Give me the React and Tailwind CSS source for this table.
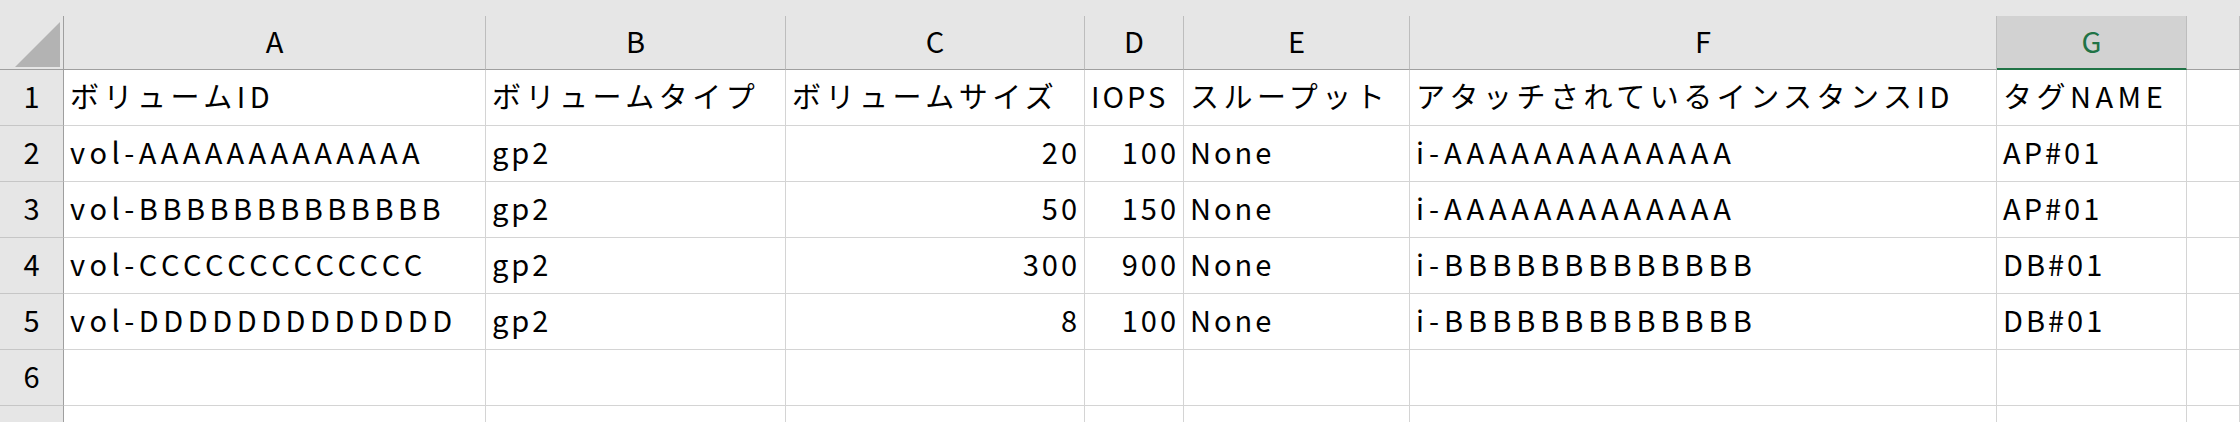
const cols = ["A", "B", "C", "D", "E", "F", "G", ""];

const rows = [
  ["ボリュームID", "ボリュームタイプ", "ボリュームサイズ", "IOPS", "スループット", "アタッチされているインスタンスID", "タグNAME"],
  ["vol-AAAAAAAAAAAAA", "gp2", 20, 100, "None", "i-AAAAAAAAAAAAA", "AP#01"],
  ["vol-BBBBBBBBBBBBB", "gp2", 50, 150, "None", "i-AAAAAAAAAAAAA", "AP#01"],
  ["vol-CCCCCCCCCCCCC", "gp2", 300, 900, "None", "i-BBBBBBBBBBBBB", "DB#01"],
  ["vol-DDDDDDDDDDDDD", "gp2", 8, 100, "None", "i-BBBBBBBBBBBBB", "DB#01"],
  ["", "", "", "", "", "", ""],
  ["", "", "", "", "", "", ""],
];

function trackingFor(r, c) {
  if (r === 0) return c === 3 ? "tracking-[3px]" : "tracking-[4.5px]";
  if (c === 0) return "tracking-[4.5px]";
  if (c === 5) return "tracking-[5px]";
  return "tracking-[3px]";
}

function ColHeader({ label }) {
  // column G is the selected one
  if (label === "G") {
    return (
      <div className="flex h-[54px] items-center justify-center border-r border-b-2 border-r-[#bdbdbd] border-b-[#217346] bg-[#d2d2d2] pb-[3px] text-[29px] leading-[49px] text-[#217346]">
        {label}
      </div>
    );
  }
  return (
    <div className="flex h-[54px] items-center justify-center border-r border-b border-r-[#bdbdbd] border-b-[#9f9f9f] pb-[4px] text-[29px] leading-[49px] text-black">
      {label}
    </div>
  );
}

function Cell({ value, track = "tracking-[3px]" }) {
  const isNum = typeof value === "number";
  return (
    <div
      className={[
        "flex h-[56px] items-center overflow-hidden whitespace-nowrap border-r border-b border-[#d4d4d4] bg-white pb-[4px] text-[29px] leading-[51px] text-black",
        isNum ? "justify-end pr-[4px]" : "pl-[6px]",
        track,
      ].join(" ")}
    >
      {value}
    </div>
  );
}

export default function App() {
  return (
    <div
      className="h-[422px] w-[2240px] overflow-hidden bg-[#e6e6e6]"
      style={{ fontFamily: '"Noto Sans CJK JP", "Noto Sans", sans-serif' }}
    >
      {/* strip above the column headers */}
      <div className="h-[16px]" />

      <div className="grid grid-cols-[64px_422px_300px_299px_99px_226px_587px_190px_1fr]">
        {/* select-all corner */}
        <div className="h-[54px] border-r border-b border-[#9f9f9f]">
          <svg width="63" height="53" viewBox="0 0 63 53">
            <polygon points="15,51 60,6 60,51" fill="#b3b3b3" />
          </svg>
        </div>
        {cols.map((c, i) => (
          <ColHeader key={i} label={c} />
        ))}

        {rows.map((row, r) => (
          <div key={r} className="contents">
            <div className="flex h-[56px] items-center justify-center border-r border-b border-r-[#9f9f9f] border-b-[#c6c6c6] pb-[4px] text-[29px] leading-[51px] text-black">
              {r + 1}
            </div>
            {row.map((v, c) => (
              <Cell key={c} value={v} track={trackingFor(r, c)} />
            ))}
            <Cell value="" />
          </div>
        ))}
      </div>
    </div>
  );
}
